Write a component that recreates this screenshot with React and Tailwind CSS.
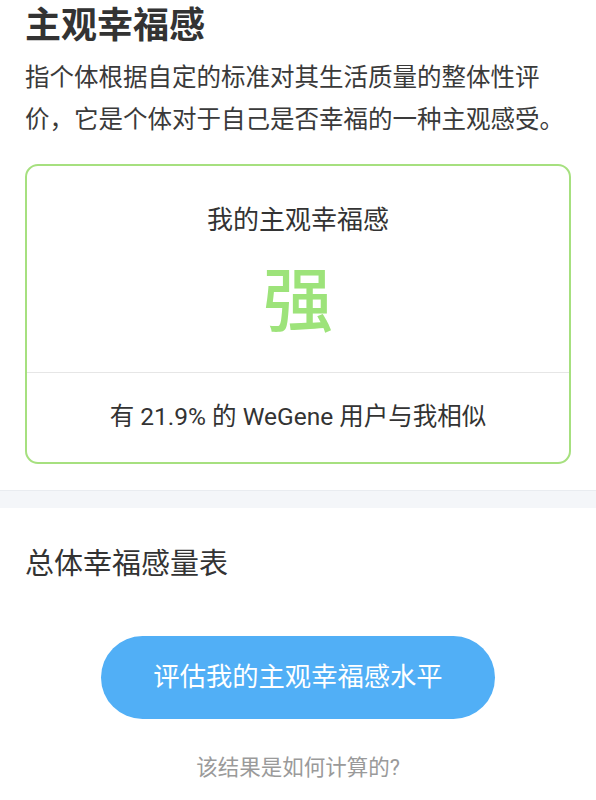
const font = { fontFamily: 'Roboto, "Noto Sans CJK SC", sans-serif' };

export default function App() {
  return (
    <div className="w-[596px] h-[800px] bg-white overflow-hidden" style={font}>
      <div className="px-[25px] pt-[3px]">
        <h1 className="text-[36px] leading-[46px] font-bold text-[#333]">主观幸福感</h1>
        <p className="mt-[8px] text-[24.5px] leading-[42px] text-[#3a3a3a]">
          指个体根据自定的标准对其生活质量的整体性评
          <br />
          价，它是个体对于自己是否幸福的一种主观感受。
        </p>

        <div className="mt-[23px] h-[300px] rounded-[13px] border-2 border-[#a6e07f] flex flex-col">
          <div className="flex-1 flex flex-col items-center pt-[36px]">
            <div className="text-[26px] leading-[36px] text-[#333]">我的主观幸福感</div>
            <div className="mt-[24px] text-[70px] leading-[80px] font-medium text-[#9de37a]">强</div>
          </div>
          <div className="h-[90px] border-t border-[#e6e6e6] flex items-center justify-center text-[24.5px] text-[#333]">
            有 21.9% 的 WeGene 用户与我相似
          </div>
        </div>
      </div>

      <div className="mt-[26px] h-[18px] bg-[#f4f6f9] border-t border-[#e9ecf0]" />

      <div className="px-[25px]">
        <h2 className="mt-[36px] text-[29px] leading-[40px] text-[#333]">总体幸福感量表</h2>
        <div className="mt-[52px] flex justify-center">
          <button className="w-[394px] h-[83px] rounded-full bg-[#51aff6] text-white text-[26.3px]">
            评估我的主观幸福感水平
          </button>
        </div>
        <div className="mt-[33px] text-center text-[21.5px] leading-[32px] text-[#9a9a9a]">
          该结果是如何计算的?
        </div>
      </div>
    </div>
  );
}
